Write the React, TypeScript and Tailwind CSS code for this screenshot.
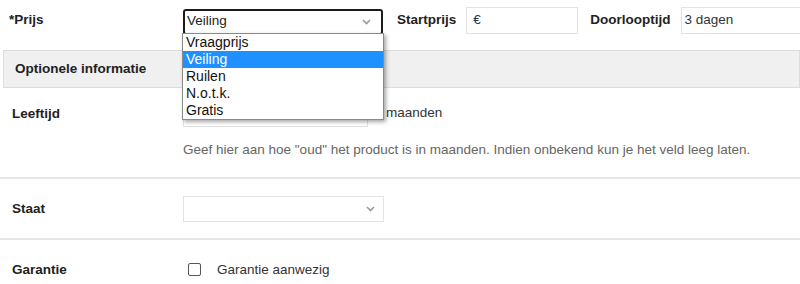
import React from "react";

const Chevron = () => (
  <svg width="9" height="6" viewBox="0 0 9 6" className="shrink-0">
    <path d="M1 1 L4.5 4.5 L8 1" fill="none" stroke="#999" strokeWidth="1.6" />
  </svg>
);

export default function App() {
  const options = ["Vraagprijs", "Veiling", "Ruilen", "N.o.t.k.", "Gratis"];
  return (
    <div
      className="relative w-[800px] h-[284px] overflow-hidden bg-white text-[13.5px] text-[#222]"
      style={{ fontFamily: '"Liberation Sans", Arial, sans-serif' }}
    >
      {/* Prijs row */}
      <div className="flex items-center h-[40px] pt-[1px]">
        <div className="w-[183px] shrink-0 pl-[9px] font-bold">*Prijs</div>
        <div className="w-[200px] shrink-0 h-[26px] mt-[2px] border-2 border-[#1b1b1b] rounded-[3px] flex items-center justify-between pl-[2px] pr-[10px]">
          <span>Veiling</span>
          <Chevron />
        </div>
        <div className="ml-[14px] shrink-0 font-bold">Startprijs</div>
        <div className="ml-[10px] shrink-0 w-[112px] h-[27px] border border-[#e3e3e3] flex items-center pl-[6px] text-[#333]">
          €
        </div>
        <div className="ml-[12px] shrink-0 font-bold">Doorlooptijd</div>
        <div className="ml-[10px] w-[140px] h-[27px] border border-[#e3e3e3] flex items-center pl-[3px] text-[#333] shrink-0">
          3 dagen
        </div>
      </div>

      {/* Optionele informatie */}
      <div className="mt-[10px] ml-[3px] h-[38px] bg-[#f0f0f0] border border-[#dcdcdc] flex items-center pl-[11px] font-bold">
        Optionele informatie
      </div>

      {/* Leeftijd */}
      <div className="flex items-start pt-[12px]">
        <div className="w-[183px] shrink-0 pl-[12px] font-bold leading-[27px]">Leeftijd</div>
        <div className="flex flex-col">
          <div className="flex items-center">
            <div className="w-[185px] shrink-0 h-[27px] border border-[#e3e3e3]" />
            <span className="ml-[18px] text-[#333]">maanden</span>
          </div>
          <div className="mt-[13px] text-[#666] whitespace-nowrap">
            Geef hier aan hoe "oud" het product is in maanden. Indien onbekend kun je het veld leeg laten.
          </div>
        </div>
      </div>

      <div className="mt-[17px] h-[2px] bg-[#e6e6e6]" />

      {/* Staat */}
      <div className="flex items-center h-[59px] pt-[1px]">
        <div className="w-[183px] shrink-0 pl-[12px] font-bold">Staat</div>
        <div className="w-[201px] shrink-0 h-[26px] border border-[#e3e3e3] flex items-center justify-end pr-[8px]">
          <Chevron />
        </div>
      </div>

      <div className="h-[2px] bg-[#e6e6e6]" />

      {/* Garantie */}
      <div className="flex items-center h-[58px] pt-[1px]">
        <div className="w-[188px] shrink-0 pl-[12px] font-bold">Garantie</div>
        <div className="w-[13px] h-[13px] shrink-0 border border-[#555] rounded-[2px] bg-white" />
        <span className="ml-[16px] text-[#333]">Garantie aanwezig</span>
      </div>

      {/* Open dropdown list */}
      <div className="absolute left-[182px] top-[33px] w-[202px] bg-white border border-[#8a8a8a] shadow-[2px_2px_4px_rgba(0,0,0,0.35)]">
        {options.map((o) => (
          <div
            key={o}
            className={
              o === "Veiling"
                ? "h-[17px] leading-[17px] pl-[3px] text-[14px] bg-[#1e90ff] text-white"
                : "h-[17px] leading-[17px] pl-[3px] text-[14px] text-[#111]"
            }
          >
            {o}
          </div>
        ))}
      </div>
    </div>
  );
}
